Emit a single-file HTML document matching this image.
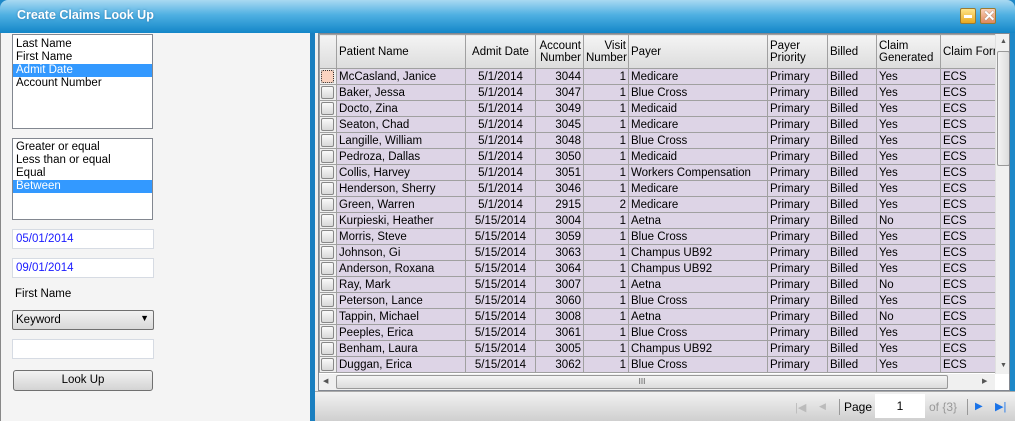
<!DOCTYPE html>
<html><head><style>
*{box-sizing:border-box;margin:0;padding:0}
body{width:1015px;height:421px;overflow:hidden;background:#1e88c8;font-family:"Liberation Sans",sans-serif;font-size:12px;position:relative}
.title{position:absolute;left:0;top:0;width:1015px;height:33px;background:linear-gradient(#a9d9f2,#4fb0e2 45%,#1386c8);border-radius:8px 8px 0 0}
.title span{position:absolute;left:17px;top:8px;color:#fff;font-weight:bold;font-size:12.5px;text-shadow:0 0 2px #3a7fb0}
.btn{position:absolute;top:8px;width:16px;height:16px;border:1px solid #9a7a30;border-radius:2px}
.left{position:absolute;left:0;top:33px;width:310px;height:388px;background:#f4f4f4;border-left:1px solid #888}
.lb{position:absolute;background:#fff;border:1px solid #828790}
.lb div{height:13px;line-height:13px;padding-left:3px;font-size:11.5px}
.sel{background:#3399ff;color:#fff}
.tb{position:absolute;left:11px;width:142px;height:20px;background:#fff;border:1px solid #d6dbe3;color:#1a1aff;padding:3px 0 0 3px;font-size:11.5px}
.grid{position:absolute;left:318px;top:33px;width:692px;height:358px;background:#fff;border:1px solid #828790;overflow:hidden}
table{border-collapse:collapse;table-layout:fixed;position:absolute;left:0;top:0;width:681px}
td,th{border:1px solid #a0a0a0;height:16px;font-size:11.5px;white-space:nowrap;overflow:hidden;padding:0 2px;font-weight:normal}
th{height:34px;background:linear-gradient(#f4f4f4,#dcdcdc);text-align:left;line-height:12px;vertical-align:middle;white-space:normal}
tbody td{background:#ddd4e6;line-height:14px}
td.rh{background:#f0f0f0;padding:1px}
td.rh div{width:13px;height:13px;border:1px solid #888;border-radius:2px;background:linear-gradient(#fafafa,#d8d8d8)}
.c{text-align:center}.r{text-align:right}
.vs{position:absolute;left:676px;top:0;width:16px;height:340px;background:#f0f0f0;border-left:1px solid #e0e0e0}
.hs{position:absolute;left:0;top:340px;width:676px;height:16px;background:#f0f0f0}
.foot{position:absolute;left:315px;top:391px;width:700px;height:30px;background:linear-gradient(#f2f2f2,#cfcfcf);border-top:1px solid #aaa}
</style></head><body>
<div class="title"><span>Create Claims Look Up</span>
<div class="btn" style="left:960px;background:linear-gradient(#ffe58a,#e8a820)"><div style="position:absolute;left:3px;top:6px;width:8px;height:3px;background:#fff"></div></div>
<div class="btn" style="left:980px;background:linear-gradient(#fbd1b8,#e0885c)"><span style="position:absolute;left:2px;top:-2px;color:#fff;font-weight:bold;font-size:15px;text-shadow:0 0 1px #555">✕</span></div>
</div>
<div class="left">
<div class="lb" style="left:11px;top:1px;width:141px;height:95px;padding-top:3px"><div>Last Name</div><div>First Name</div><div class="sel">Admit Date</div><div>Account Number</div></div>
<div class="lb" style="left:11px;top:105px;width:141px;height:82px;padding-top:2px"><div>Greater or equal</div><div>Less than or equal</div><div>Equal</div><div class="sel">Between</div></div>
<div class="tb" style="top:196px">05/01/2014</div>
<div class="tb" style="top:225px">09/01/2014</div>
<div style="position:absolute;left:14px;top:255px;font-size:11.5px">First Name</div>
<div style="position:absolute;left:11px;top:277px;width:142px;height:20px;border:1px solid #707070;border-radius:2px;background:linear-gradient(#f2f2f2,#d9d9d9);padding:3px 0 0 3px;font-size:11.5px">Keyword<span style="position:absolute;right:4px;top:2px;font-size:9px">▼</span></div>
<div class="tb" style="top:306px"></div>
<div style="position:absolute;left:12px;top:337px;width:140px;height:21px;border:1px solid #707070;border-radius:3px;background:linear-gradient(#f2f2f2,#d4d4d4);text-align:center;padding-top:3px;font-size:11.5px">Look Up</div>
</div>
<div style="position:absolute;left:310px;top:33px;width:5px;height:388px;background:#1a7fc0"></div>
<div style="position:absolute;left:315px;top:33px;width:695px;height:360px;background:#f0f0f0"></div>
<div class="grid">
<table>
<colgroup><col style="width:17px"><col style="width:129px"><col style="width:70px"><col style="width:48px"><col style="width:45px"><col style="width:139px"><col style="width:60px"><col style="width:49px"><col style="width:64px"><col style="width:60px"></colgroup>
<thead><tr><th></th><th>Patient Name</th><th class="c">Admit Date</th><th class="r">Account Number</th><th class="r">Visit Number</th><th>Payer</th><th>Payer Priority</th><th>Billed</th><th>Claim Generated</th><th style="white-space:nowrap">Claim Form</th></tr></thead>
<tbody>
<tr><td class="rh"><div style="background:#fbd3c0;border:1px dotted #333"></div></td><td>McCasland, Janice</td><td class="c">5/1/2014</td><td class="r">3044</td><td class="r">1</td><td>Medicare</td><td>Primary</td><td>Billed</td><td>Yes</td><td>ECS</td></tr>
<tr><td class="rh"><div></div></td><td>Baker, Jessa</td><td class="c">5/1/2014</td><td class="r">3047</td><td class="r">1</td><td>Blue Cross</td><td>Primary</td><td>Billed</td><td>Yes</td><td>ECS</td></tr>
<tr><td class="rh"><div></div></td><td>Docto, Zina</td><td class="c">5/1/2014</td><td class="r">3049</td><td class="r">1</td><td>Medicaid</td><td>Primary</td><td>Billed</td><td>Yes</td><td>ECS</td></tr>
<tr><td class="rh"><div></div></td><td>Seaton, Chad</td><td class="c">5/1/2014</td><td class="r">3045</td><td class="r">1</td><td>Medicare</td><td>Primary</td><td>Billed</td><td>Yes</td><td>ECS</td></tr>
<tr><td class="rh"><div></div></td><td>Langille, William</td><td class="c">5/1/2014</td><td class="r">3048</td><td class="r">1</td><td>Blue Cross</td><td>Primary</td><td>Billed</td><td>Yes</td><td>ECS</td></tr>
<tr><td class="rh"><div></div></td><td>Pedroza, Dallas</td><td class="c">5/1/2014</td><td class="r">3050</td><td class="r">1</td><td>Medicaid</td><td>Primary</td><td>Billed</td><td>Yes</td><td>ECS</td></tr>
<tr><td class="rh"><div></div></td><td>Collis, Harvey</td><td class="c">5/1/2014</td><td class="r">3051</td><td class="r">1</td><td>Workers Compensation</td><td>Primary</td><td>Billed</td><td>Yes</td><td>ECS</td></tr>
<tr><td class="rh"><div></div></td><td>Henderson, Sherry</td><td class="c">5/1/2014</td><td class="r">3046</td><td class="r">1</td><td>Medicare</td><td>Primary</td><td>Billed</td><td>Yes</td><td>ECS</td></tr>
<tr><td class="rh"><div></div></td><td>Green, Warren</td><td class="c">5/1/2014</td><td class="r">2915</td><td class="r">2</td><td>Medicare</td><td>Primary</td><td>Billed</td><td>Yes</td><td>ECS</td></tr>
<tr><td class="rh"><div></div></td><td>Kurpieski, Heather</td><td class="c">5/15/2014</td><td class="r">3004</td><td class="r">1</td><td>Aetna</td><td>Primary</td><td>Billed</td><td>No</td><td>ECS</td></tr>
<tr><td class="rh"><div></div></td><td>Morris, Steve</td><td class="c">5/15/2014</td><td class="r">3059</td><td class="r">1</td><td>Blue Cross</td><td>Primary</td><td>Billed</td><td>Yes</td><td>ECS</td></tr>
<tr><td class="rh"><div></div></td><td>Johnson, Gi</td><td class="c">5/15/2014</td><td class="r">3063</td><td class="r">1</td><td>Champus UB92</td><td>Primary</td><td>Billed</td><td>Yes</td><td>ECS</td></tr>
<tr><td class="rh"><div></div></td><td>Anderson, Roxana</td><td class="c">5/15/2014</td><td class="r">3064</td><td class="r">1</td><td>Champus UB92</td><td>Primary</td><td>Billed</td><td>Yes</td><td>ECS</td></tr>
<tr><td class="rh"><div></div></td><td>Ray, Mark</td><td class="c">5/15/2014</td><td class="r">3007</td><td class="r">1</td><td>Aetna</td><td>Primary</td><td>Billed</td><td>No</td><td>ECS</td></tr>
<tr><td class="rh"><div></div></td><td>Peterson, Lance</td><td class="c">5/15/2014</td><td class="r">3060</td><td class="r">1</td><td>Blue Cross</td><td>Primary</td><td>Billed</td><td>Yes</td><td>ECS</td></tr>
<tr><td class="rh"><div></div></td><td>Tappin, Michael</td><td class="c">5/15/2014</td><td class="r">3008</td><td class="r">1</td><td>Aetna</td><td>Primary</td><td>Billed</td><td>No</td><td>ECS</td></tr>
<tr><td class="rh"><div></div></td><td>Peeples, Erica</td><td class="c">5/15/2014</td><td class="r">3061</td><td class="r">1</td><td>Blue Cross</td><td>Primary</td><td>Billed</td><td>Yes</td><td>ECS</td></tr>
<tr><td class="rh"><div></div></td><td>Benham, Laura</td><td class="c">5/15/2014</td><td class="r">3005</td><td class="r">1</td><td>Champus UB92</td><td>Primary</td><td>Billed</td><td>Yes</td><td>ECS</td></tr>
<tr><td class="rh"><div></div></td><td>Duggan, Erica</td><td class="c">5/15/2014</td><td class="r">3062</td><td class="r">1</td><td>Blue Cross</td><td>Primary</td><td>Billed</td><td>Yes</td><td>ECS</td></tr>
</tbody></table>
<div class="vs"><span style="position:absolute;left:4px;top:4px;font-size:7px;color:#555">▲</span><div style="position:absolute;left:1px;top:17px;width:13px;height:115px;border:1px solid #999;border-radius:2px;background:linear-gradient(90deg,#f4f4f4,#dcdcdc)"></div><span style="position:absolute;left:4px;top:328px;font-size:7px;color:#555">▼</span></div>
<div class="hs"><span style="position:absolute;left:4px;top:3px;font-size:7px;color:#555">◀</span><div style="position:absolute;left:17px;top:1px;width:612px;height:14px;border:1px solid #999;border-radius:2px;background:linear-gradient(#f4f4f4,#dcdcdc);text-align:center;font-size:8px;line-height:12px;color:#555">III</div><span style="position:absolute;left:663px;top:3px;font-size:7px;color:#555">▶</span></div>
</div>
<div class="foot">
<div style="position:absolute;left:480px;top:9px;color:#bbb;font-size:11px">|◀</div>
<div style="position:absolute;left:504px;top:9px;color:#bbb;font-size:9px">◀</div>
<div style="position:absolute;left:524px;top:7px;width:1px;height:16px;background:#999"></div>
<div style="position:absolute;left:529px;top:8px;font-size:12px">Page</div>
<div style="position:absolute;left:560px;top:2px;width:50px;height:24px;background:#fff;text-align:center;padding-top:5px">1</div>
<div style="position:absolute;left:614px;top:8px;color:#999">of {3}</div>
<div style="position:absolute;left:652px;top:7px;width:1px;height:16px;background:#999"></div>
<div style="position:absolute;left:660px;top:9px;color:#1a73e8;font-size:10px">▶</div>
<div style="position:absolute;left:680px;top:8px;color:#1a73e8;font-size:11px">▶|</div>
</div>
</body></html>
